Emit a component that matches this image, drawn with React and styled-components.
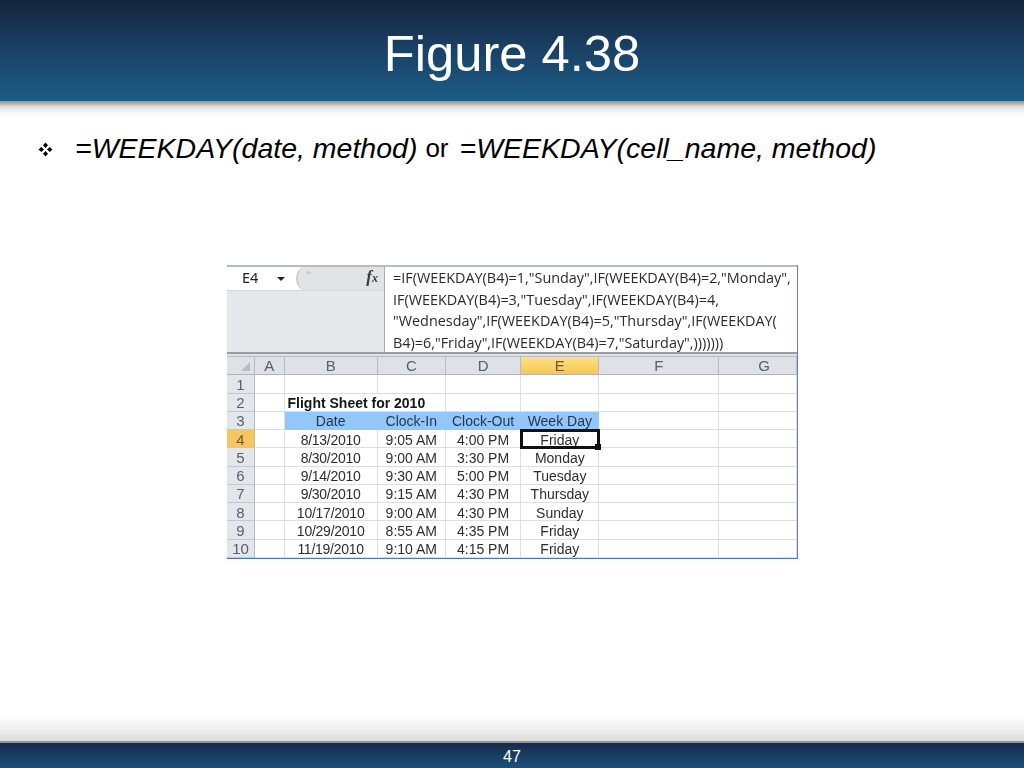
import React from 'react';
import styled, { createGlobalStyle } from 'styled-components';

const GlobalStyle = createGlobalStyle`
  html, body {
    margin: 0;
    padding: 0;
    background: #fff;
  }
`;

const Page = styled.div`
  width: 1024px;
  height: 768px;
  display: flex;
  flex-direction: column;
  overflow: hidden;
  background: #fff;
  font-family: "Liberation Sans", Arial, sans-serif;
`;

const Header = styled.header`
  height: 101px;
  flex: none;
  display: flex;
  align-items: center;
  justify-content: center;
  background: linear-gradient(180deg, #13233d 0%, #1a3f63 45%, #1c5c86 100%);
`;

const Title = styled.h1`
  margin: 5px 0 0;
  font-size: 50.7px;
  font-weight: 400;
  color: #fff;
`;

const HeaderFade = styled.div`
  height: 18px;
  flex: none;
  background: linear-gradient(180deg, #8e9ba6 0%, #b3aca8 14%, #dcdcdc 30%, #f6f6f6 62%, #fff 100%);
`;

const Content = styled.main`
  flex: 1;
  display: flex;
  flex-direction: column;
`;

const Bullet = styled.div`
  display: flex;
  align-items: center;
  margin: 11px 0 0 38px;
  height: 36px;
  font-size: 28.5px;
  color: #000;
  white-space: nowrap;
`;

const BulletMark = styled.svg`
  width: 15px;
  height: 15px;
  margin: 2px 22px 0 0;
  flex: none;
`;

const Formula = styled.em`
  font-style: italic;
`;

const Plain = styled.span`
  margin: 0 11px 0 8px;
  font-size: 26px;
`;

const Sheet = styled.div`
  width: 571px;
  margin: 99px 0 0 227px;
  border-right: 1px solid #5f80b6;
  border-bottom: 1px solid #4f76b3;
  box-sizing: border-box;
  background: #fff;
  filter: blur(0.4px);
`;

const FormulaBar = styled.div`
  display: grid;
  grid-template-columns: 158px 1fr;
  height: 89px;
  border-top: 2px solid #b8bbc0;
  border-bottom: 2px solid #9a9ea4;
  box-sizing: border-box;
`;

const NameColumn = styled.div`
  display: flex;
  flex-direction: column;
  background: #e6e8eb;
  border-right: 1px solid #a9adb3;
`;

const NameBox = styled.div`
  height: 23px;
  display: flex;
  align-items: center;
  background: #fff;
  border-bottom: 1px solid #d3d5d9;
  font-family: "Noto Sans", sans-serif;
  font-size: 14.5px;
  color: #222;
`;

const NameText = styled.span`
  width: 45px;
  margin-bottom: 3px;
  padding-left: 15px;
  box-sizing: border-box;
`;

const DropArrow = styled.span`
  width: 0;
  height: 0;
  border-left: 4px solid transparent;
  border-right: 4px solid transparent;
  border-top: 4px solid #222;
  margin: 0 0 0 5px;
`;

const PillArea = styled.div`
  flex: 1;
  align-self: stretch;
  display: flex;
  align-items: flex-start;
  margin-left: 11px;
  background: #e1e3e7;
  border-left: 2px solid #c9ccd1;
  border-radius: 9px 0 0 9px / 50% 0 0 50%;
`;

const PillDot = styled.span`
  width: 5px;
  height: 3px;
  margin: 4px 0 0 8px;
  border-radius: 50%;
  background: #c6c9cd;
`;

const FxMark = styled.span`
  margin: 0 6px 0 auto;
  font-family: "Liberation Serif", serif;
  font-style: italic;
  font-weight: 700;
  font-size: 17px;
  line-height: 20px;
  color: #3b3b3b;
`;

const FxSub = styled.span`
  font-size: 12px;
`;

const FormulaText = styled.div`
  padding: 0 0 0 8px;
  font-family: "Open Sans", sans-serif;
  font-size: 14.4px;
  line-height: 21.5px;
  color: #2b2b2b;
  white-space: nowrap;
  overflow: hidden;
`;

const Strip = styled.div`
  height: 3px;
  background: #dfe2e6;
  border-bottom: 1px solid #b9bdc3;
  box-sizing: border-box;
`;

const Grid = styled.div`
  display: grid;
  grid-template-columns: 28px 29.5px 93.3px 68px 75.5px 78px 120px 1fr;
  grid-auto-rows: 18.25px;
  font-size: 14px;
  color: #2e2e2e;
`;

const ColHead = styled.div`
  display: flex;
  align-items: center;
  justify-content: center;
  box-sizing: border-box;
  padding-left: ${({ $shift }) => ($shift ? `${$shift}px` : '0')};
  border-right: 1px solid #b6bcc4;
  border-bottom: 1px solid #b0b4ba;
  color: ${({ $active }) => ($active ? '#6b5a2a' : '#58606a')};
  background: ${({ $active }) =>
    $active ? 'linear-gradient(180deg, #fbe08b, #f9c64f)' : '#dee1e6'};
  font-size: 15px;
`;

const Corner = styled(ColHead)`
  align-items: flex-end;
  justify-content: flex-end;
  padding: 0 4px 3px 0;
`;

const CornerMark = styled.span`
  width: 0;
  height: 0;
  border-left: 9px solid transparent;
  border-bottom: 9px solid #b8bcc2;
`;

const RowHead = styled(ColHead)`
  padding-top: 1px;
  color: ${({ $active }) => ($active ? '#6b5a2a' : '#59626c')};
  background: ${({ $active }) => ($active ? '#f7c661' : '#e3e6ea')};
  border-bottom-color: #c4c8ce;
`;

const Cell = styled.div`
  position: relative;
  display: flex;
  align-items: center;
  justify-content: ${({ $left }) => ($left ? 'flex-start' : 'center')};
  box-sizing: border-box;
  white-space: nowrap;
  padding: 2px 0 0 ${({ $left }) => ($left ? '3px' : '0')};
  grid-column: ${({ $span }) => ($span ? `span ${$span}` : 'auto')};
  letter-spacing: ${({ $tight }) => ($tight ? '-0.25px' : '0')};
  font-weight: ${({ $bold }) => ($bold ? 700 : 400)};
  color: ${({ $head, $bold }) => ($head ? '#1f3552' : $bold ? '#151515' : '#2e2e2e')};
  background: ${({ $head }) => ($head ? '#94c6f7' : '#fff')};
  border-right: 1px solid ${({ $head }) => ($head ? '#94c6f7' : '#dcdee2')};
  border-bottom: 1px solid ${({ $head }) => ($head ? '#94c6f7' : '#dcdee2')};
  outline: ${({ $selected }) => ($selected ? '3px solid #111' : 'none')};
  outline-offset: -2px;
  z-index: ${({ $selected }) => ($selected ? 1 : 0)};
`;

const Handle = styled.span`
  position: absolute;
  right: -3px;
  bottom: -3px;
  width: 6px;
  height: 6px;
  background: #111;
`;

const FooterFade = styled.div`
  height: 26px;
  flex: none;
  background: linear-gradient(180deg, #fff 0%, #f2f2f2 45%, #dcdcdc 100%);
  border-bottom: 2px solid #8f9499;
`;

const Footer = styled.footer`
  height: 25px;
  flex: none;
  display: flex;
  align-items: center;
  justify-content: center;
  box-sizing: border-box;
  padding-top: 3px;
  background: linear-gradient(180deg, #16294a 0%, #1c5278 100%);
  color: #fff;
  font-size: 16px;
`;

const columns = ['A', 'B', 'C', 'D', 'E', 'F', 'G'];

const rows = [
  { n: 1 },
  { n: 2, title: 'Flight Sheet for 2010' },
  { n: 3, head: true, values: ['Date', 'Clock-In', 'Clock-Out', 'Week Day'] },
  { n: 4, values: ['8/13/2010', '9:05 AM', '4:00 PM', 'Friday'], selected: true },
  { n: 5, values: ['8/30/2010', '9:00 AM', '3:30 PM', 'Monday'] },
  { n: 6, values: ['9/14/2010', '9:30 AM', '5:00 PM', 'Tuesday'] },
  { n: 7, values: ['9/30/2010', '9:15 AM', '4:30 PM', 'Thursday'] },
  { n: 8, values: ['10/17/2010', '9:00 AM', '4:30 PM', 'Sunday'] },
  { n: 9, values: ['10/29/2010', '8:55 AM', '4:35 PM', 'Friday'] },
  { n: 10, values: ['11/19/2010', '9:10 AM', '4:15 PM', 'Friday'] },
];

const formulaLines = [
  '=IF(WEEKDAY(B4)=1,"Sunday",IF(WEEKDAY(B4)=2,"Monday",',
  'IF(WEEKDAY(B4)=3,"Tuesday",IF(WEEKDAY(B4)=4,',
  '"Wednesday",IF(WEEKDAY(B4)=5,"Thursday",IF(WEEKDAY(',
  'B4)=6,"Friday",IF(WEEKDAY(B4)=7,"Saturday",)))))))',
];

function SheetRow({ row }) {
  const isActive = row.selected;
  const values = row.values || [];
  return (
    <>
      <RowHead $active={isActive}>{row.n}</RowHead>
      <Cell />
      {row.title ? (
        <Cell $left $bold $span={2}>{row.title}</Cell>
      ) : (
        <>
          <Cell $head={row.head} $tight={!row.head}>{values[0]}</Cell>
          <Cell $head={row.head}>{values[1]}</Cell>
        </>
      )}
      <Cell $head={row.head}>{values[2]}</Cell>
      <Cell $head={row.head} $selected={isActive}>
        {values[3]}
        {isActive && <Handle />}
      </Cell>
      <Cell />
      <Cell />
    </>
  );
}

export default function App() {
  return (
    <Page>
      <GlobalStyle />
      <Header>
        <Title>Figure 4.38</Title>
      </Header>
      <HeaderFade />
      <Content>
        <Bullet>
          <BulletMark viewBox="0 0 15 15">
            <path d="M7.5 0.5 10 3.2 7.5 6 5 3.2Z M7.5 9 10 11.8 7.5 14.5 5 11.8Z M3.2 5 6 7.5 3.2 10 0.5 7.5Z M11.8 5 14.5 7.5 11.8 10 9 7.5Z" fill="#000" />
          </BulletMark>
          <Formula>=WEEKDAY(date, method)</Formula>
          <Plain>or</Plain>
          <Formula>=WEEKDAY(cell_name, method)</Formula>
        </Bullet>
        <Sheet>
          <FormulaBar>
            <NameColumn>
              <NameBox>
                <NameText>E4</NameText>
                <DropArrow />
                <PillArea>
                  <PillDot />
                  <FxMark>f<FxSub>x</FxSub></FxMark>
                </PillArea>
              </NameBox>
            </NameColumn>
            <FormulaText>
              {formulaLines.map((line) => (
                <div key={line}>{line}</div>
              ))}
            </FormulaText>
          </FormulaBar>
          <Strip />
          <Grid>
            <Corner><CornerMark /></Corner>
            {columns.map((c) => (
              <ColHead key={c} $active={c === 'E'} $shift={c === 'G' ? 13 : 0}>{c}</ColHead>
            ))}
            {rows.map((row) => (
              <SheetRow key={row.n} row={row} />
            ))}
          </Grid>
        </Sheet>
      </Content>
      <FooterFade />
      <Footer>47</Footer>
    </Page>
  );
}
